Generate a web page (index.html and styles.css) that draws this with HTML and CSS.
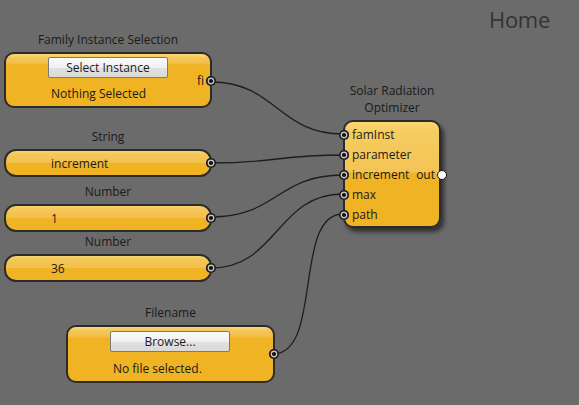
FILE: index.html
```html
<!DOCTYPE html>
<html>
<head>
<meta charset="utf-8">
<link rel="stylesheet" href="styles.css">
</head>
<body>
<div class="canvas">
  <div class="home">Home</div>
  <svg class="wires" width="579" height="405" viewBox="0 0 579 405">
    <path d="M211,82 C276,82 278,134 343,134"/>
    <path d="M211,163 C277,163 277,155 343,155"/>
    <path d="M211,217 C277,217 277,175 343,175"/>
    <path d="M211,268 C277,268 277,194 343,194"/>
    <path d="M273,354 C323,354 293,214 343,214"/>
  </svg>

  <div class="group g-family">
    <div class="title">Family Instance Selection</div>
    <div class="box tall">
      <div class="btn">Select Instance</div>
      <div class="status">Nothing Selected</div>
      <span class="outlabel">fi</span>
      <span class="port out-port"></span>
    </div>
  </div>

  <div class="group g-string">
    <div class="title">String</div>
    <div class="box pill"><span class="val">increment</span><span class="port out-port"></span></div>
  </div>

  <div class="group g-num1">
    <div class="title">Number</div>
    <div class="box pill"><span class="val">1</span><span class="port out-port"></span></div>
  </div>

  <div class="group g-num2">
    <div class="title">Number</div>
    <div class="box pill"><span class="val">36</span><span class="port out-port"></span></div>
  </div>

  <div class="group g-file">
    <div class="title">Filename</div>
    <div class="box tall">
      <div class="btn">Browse...</div>
      <div class="status">No file selected.</div>
      <span class="port out-port file-port"></span>
    </div>
  </div>

  <div class="group g-solar">
    <div class="title">Solar Radiation<br>Optimizer</div>
    <div class="box solar">
      <div class="row"><span class="port in-port"></span>famInst</div>
      <div class="row"><span class="port in-port"></span>parameter</div>
      <div class="row"><span class="port in-port"></span>increment<span class="outname">out</span><span class="port white-port"></span></div>
      <div class="row"><span class="port in-port"></span>max</div>
      <div class="row"><span class="port in-port"></span>path</div>
    </div>
  </div>
</div>
</body>
</html>
```

FILE: styles.css
```css
html, body {
  margin: 0;
  padding: 0;
}
body {
  font-family: "Open Sans", "Noto Sans", sans-serif;
  font-size: 12px;
  color: #1a1a1a;
}
.canvas {
  position: relative;
  width: 579px;
  height: 405px;
  background: #6b6b6b;
  overflow: hidden;
}
.home {
  position: absolute;
  right: 29px;
  top: 4px;
  font-size: 22px;
  color: #333333;
  letter-spacing: -0.3px;
}
.wires {
  position: absolute;
  left: 0;
  top: 0;
}
.wires path {
  fill: none;
  stroke: #1e1e1e;
  stroke-width: 1.3;
}
.group {
  position: absolute;
  display: flex;
  flex-direction: column;
  align-items: center;
  gap: 4px;
}
.title {
  line-height: 16px;
  text-align: center;
  white-space: nowrap;
}
.g-family { left: 4px; top: 32px; }
.g-string { left: 4px; top: 129px; }
.g-num1 { left: 4px; top: 184px; }
.g-num2 { left: 4px; top: 234px; }
.g-file { left: 66px; top: 305px; }
.g-solar { left: 343px; top: 82px; gap: 4px; }
.g-solar .title { line-height: 17px; }

.box {
  position: relative;
  box-sizing: border-box;
  border: 2px solid #2b2b2b;
  background: #efb323;
}
.pill {
  width: 208px;
  height: 28px;
  border-radius: 12px;
  background: linear-gradient(to bottom, #f8d675 0%, #f4c85a 12%, #f2c04c 48%, #efb323 52%, #efb323 100%);
  display: flex;
  align-items: center;
  padding-left: 45px;
  padding-top: 1px;
}
.g-file .box { width: 209px; }
.tall {
  width: 208px;
  height: 56px;
  border-radius: 10px;
  background: linear-gradient(to bottom, #fad777 0px, #f4c657 4px, #f2c04b 9px, #efb323 11px, #efb323 100%);
  padding: 3px 0 0 42px;
}
.g-file .tall { height: 58px; padding-top: 4px; }
.btn {
  box-sizing: border-box;
  width: 120px;
  height: 21px;
  border: 1px solid #7a7a7a;
  border-radius: 2px;
  background: linear-gradient(to bottom, #fbfbfb 0%, #f0f0f0 50%, #e0e0e0 51%, #dadada 100%);
  text-align: center;
  line-height: 19px;
}
.status {
  padding-left: 3px;
  margin-top: 8px;
  line-height: 16px;
}
.g-file .status { margin-top: 9px; }
.outlabel {
  position: absolute;
  right: 6px;
  top: 19px;
  line-height: 16px;
}
.port {
  position: absolute;
  width: 10px;
  height: 10px;
  border-radius: 50%;
  box-sizing: border-box;
  background: #111;
  box-shadow: inset 0 0 0 1.6px #111, inset 0 0 0 2.9px #c4c4c4;
}
.out-port {
  right: -6px;
  top: 50%;
  margin-top: -5px;
}
.tall .out-port { top: 27px; }
.solar {
  width: 98px;
  height: 108px;
  border-radius: 10px;
  background: linear-gradient(to bottom, #fbd673 0%, #f6cd62 8%, #f3c453 48%, #efb323 50%, #efb323 100%);
  box-shadow: 3px 4px 4px rgba(0, 0, 0, 0.55);
  padding-top: 3px;
  display: flex;
  flex-direction: column;
}
.row {
  position: relative;
  height: 20px;
  line-height: 20px;
  padding-left: 7px;
}
.in-port {
  left: -6px;
  top: 5px;
}
.outname {
  position: absolute;
  right: 4px;
  top: 0;
}
.white-port {
  right: -8px;
  top: 5px;
  background: #fff;
  box-shadow: none;
  border: 1.5px solid #111;
}
```
